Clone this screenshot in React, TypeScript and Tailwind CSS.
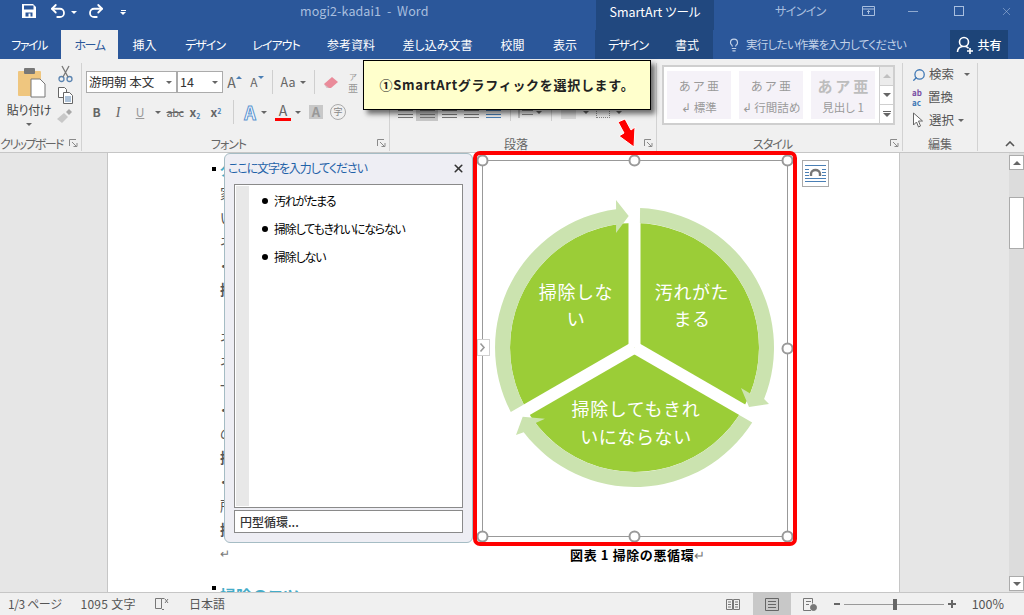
import { ReactNode } from 'react';
import { Lightbulb, Redo2, Search, Undo2, X } from 'lucide-react';

const TABS = [
  { label: 'ファイル', w: 'w-[58px] tracking-[-1.5px]' },
  { label: 'ホーム', w: 'ml-[3px] w-[57px] tracking-[-1.5px] bg-[#f0f0f0] text-[#2b579a]' },
  { label: '挿入', w: 'w-[53px]' },
  { label: 'デザイン', w: 'w-[68px] tracking-[-1px]' },
  { label: 'レイアウト', w: 'w-[74px] tracking-[-1px]' },
  { label: '参考資料', w: 'w-[76px]' },
  { label: '差し込み文書', w: 'w-[97px]' },
  { label: '校閲', w: 'w-[53px]' },
  { label: '表示', w: 'w-[52px]' },
  { label: 'デザイン', w: 'ml-[4px] w-[66px] tracking-[-1px] bg-[#21487f]' },
  { label: '書式', w: 'w-[52px] bg-[#21487f]' },
];

// sliver of each body line that peeks out left of the text pane
const BODY_LINES = ['家', 'い', 'ネ', '・', '掃', '', 'ネ', 'ネ', '一', '・', 'の', '掃', '・', '所', '掃'];

const CX = 634.5;
const CY = 347.5;
const pol = (r: number, deg: number) => {
  const a = (deg * Math.PI) / 180;
  return `${(CX + r * Math.cos(a)).toFixed(1)},${(CY + r * Math.sin(a)).toFixed(1)}`;
};
const R = 139.5;
const r = 124.5;

function ringSegment(a0: number, a0i: number, a1: number, a1i: number, head: string) {
  return `M${pol(R, a0)} A${R} ${R} 0 0 1 ${pol(R, a1)} ${head} L${pol(r, a1i)} A${r} ${r} 0 0 0 ${pol(r, a0i)} Z`;
}

function Caret({ className = '' }: { className?: string }) {
  return <span className={`inline-block w-0 h-0 border-x-[3px] border-x-transparent border-t-[3px] border-t-[#666] ${className}`} />;
}

function Launcher() {
  return (
    <svg className="absolute right-[3px] bottom-[3px]" width="9" height="9" viewBox="0 0 9 9">
      <path d="M.5 7V.5H7" fill="none" stroke="#8a8a8a" />
      <path d="M3 3l4 4M4.500 7.500h3.500V4" fill="none" stroke="#8a8a8a" />
    </svg>
  );
}

function Group({ label, w, labelClass = 'pr-[14px]', children }: { label: string; w: string; labelClass?: string; children: ReactNode }) {
  return (
    <div className={`relative flex flex-col h-[88px] border-r border-[#d2d2d2] ${w}`}>
      <div className="flex-1 min-h-0">{children}</div>
      <div className={`h-[15px] text-center text-[12px] leading-[15px] text-[#666] whitespace-nowrap ${labelClass}`}>{label}</div>
      <Launcher />
    </div>
  );
}

function Cell({ w, children }: { w: string; children: ReactNode }) {
  return <div className={`flex items-center justify-center shrink-0 h-[22px] ${w}`}>{children}</div>;
}

function Sep({ h = 'h-[24px]', m = 'mx-[4px]' }: { h?: string; m?: string }) {
  return <div className={`w-px shrink-0 bg-[#cfcfcf] ${h} ${m}`} />;
}

function AlignIcon({ active, blue }: { active?: boolean; blue?: boolean }) {
  const stroke = blue ? '#4a7fb5' : '#777';
  return (
    <div className={`flex items-center justify-center h-[18px] w-[22px] ${active ? 'bg-[#c6c6c6]' : ''}`}>
      <svg width="15" height="14" viewBox="0 0 15 14">
        <path d="M0 1.500h15M0 5.500h15M0 9.500h15M0 12.500h15" stroke={stroke} fill="none" />
      </svg>
    </div>
  );
}

function StyleChip({ label, title }: { label: string; title?: boolean }) {
  return (
    <div className="flex flex-col items-center w-[64px] h-[48px] bg-[#f5f2f8] text-[#9a9a9a]">
      <div className={`mt-[5px] leading-[20px] ${title ? 'text-[15px] font-bold text-[#bdbdbd]' : 'text-[12px]'}`}>あ ア 亜</div>
      <div className="mt-[3px] text-[11.5px] leading-[16px] whitespace-nowrap">{label}</div>
    </div>
  );
}

function Clipboard() {
  return (
    <div className="flex h-full">
      <div className="flex flex-col items-center w-[58px] pt-[5px]">
        <svg className="ml-[5px]" width="30" height="30" viewBox="0 0 30 30">
          <rect x="1" y="3" width="23" height="25" rx="1" fill="#efc67f" />
          <rect x="7" y="0" width="11" height="6" rx="1" fill="#777" />
          <path d="M14 11h9l5 5v13H14z" fill="#fff" stroke="#777" />
        </svg>
        <div className="mt-[3px] text-[12px] leading-[18px] text-[#444] whitespace-nowrap tracking-[-0.3px]">貼り付け</div>
        <Caret className="mt-[4px]" />
      </div>
      <div className="flex flex-col items-center w-[14px] pt-[2px] gap-[4px]">
        <svg width="15" height="18" viewBox="0 0 15 18" fill="none" stroke="#5b84b1" strokeWidth="1.3">
          <circle cx="3.500" cy="14" r="2.500" />
          <circle cx="11.500" cy="14" r="2.500" />
          <path d="M5 12 11 1M10 12 4 1" stroke="#777" />
        </svg>
        <svg width="15" height="17" viewBox="0 0 15 17" fill="#fff" stroke="#666">
          <path d="M.5.5h6l2 2v8h-8z" />
          <path d="M5.500 5.500h6l3 3v8h-9z" />
          <path d="M7 10h6M7 12h6M7 14h6" stroke="#5b84b1" />
        </svg>
        <svg width="16" height="15" viewBox="0 0 16 15">
          <path d="M0 11 7 5l4 4-6 6z" fill="#c8c8c8" />
          <path d="M9 4 12 1l3 3-3 3z" fill="#a8a8a8" />
        </svg>
      </div>
    </div>
  );
}

function FontGroup() {
  return (
    <div className="flex flex-col pl-[4px] pt-[7px] text-[#666]">
      <div className="flex items-center">
        <div className="flex items-center justify-between w-[91px] h-[22px] px-[2px] bg-white border border-[#ababab] text-[12.5px] text-[#333] whitespace-nowrap">
          游明朝 本文
          <Caret className="mr-[2px]" />
        </div>
        <div className="flex items-center justify-between w-[46px] h-[22px] px-[2px] bg-white border border-[#ababab] text-[12.5px] text-[#333]">
          14
          <Caret className="mr-[2px]" />
        </div>
        <Cell w="w-[23px]">
          <span className="text-[14px]">A</span>
          <span className="-mt-[10px] w-0 h-0 border-x-[3px] border-x-transparent border-b-[3px] border-b-[#4a7fb5]" />
        </Cell>
        <Cell w="w-[22px]">
          <span className="text-[12px]">A</span>
          <span className="-mt-[10px] w-0 h-0 border-x-[3px] border-x-transparent border-t-[3px] border-t-[#4a7fb5]" />
        </Cell>
        <Sep m="ml-[4px] mr-[3px]" />
        <Cell w="w-[24px]"><span className="text-[12.5px]">Aa</span></Cell>
        <Caret />
        <Sep m="mx-[8px]" />
        <svg width="16" height="14" viewBox="0 0 16 14">
          <path d="M1 9 9 2l6 5-7 6H4z" fill="#ea8b9a" />
          <path d="M1 9l5 4H4z" fill="#ccc" />
        </svg>
        <div className="ml-[9px] flex flex-col items-center text-[8px] leading-[10px] text-[#999]">
          <span>ア</span>
          <span className="text-[10px] leading-[11px]">亜</span>
        </div>
      </div>
      <div className="flex items-center mt-[6px] text-[12px]">
        <Cell w="w-[21px]"><b>B</b></Cell>
        <Cell w="w-[22px]"><i className="font-['Liberation_Serif',serif] text-[14px]">I</i></Cell>
        <Cell w="w-[22px]"><span className="underline text-[#999]">U</span></Cell>
        <Cell w="w-[14px]"><Caret /></Cell>
        <Cell w="w-[20px]"><span className="line-through text-[11px] tracking-[-0.5px]">abc</span></Cell>
        <Cell w="w-[20px]"><b>x<sub className="text-[7px] text-[#4a7fb5]">2</sub></b></Cell>
        <Cell w="w-[22px]"><b>x<sup className="text-[7px] text-[#4a7fb5]">2</sup></b></Cell>
        <Sep m="ml-[6px] mr-[5px]" />
        <Cell w="w-[22px]"><span className="text-[18px] font-bold text-white [-webkit-text-stroke:1px_#5b94d0]">A</span></Cell>
        <Cell w="w-[6px]"><Caret /></Cell>
        <div className="flex flex-col items-center w-[16px] ml-[8px]">
          <span className="text-[14px] leading-[15px]">A</span>
          <span className="w-[16px] h-[3px] bg-[#ff0000]" />
        </div>
        <Cell w="w-[14px]"><Caret /></Cell>
        <div className="flex items-center justify-center w-[14px] h-[14px] ml-[4px] bg-[#c8c8c8] text-[13px] text-[#999] font-bold">A</div>
        <div className="flex items-center justify-center w-[16px] h-[16px] ml-[7px] rounded-full border border-[#aaa] text-[9px] text-[#888]">字</div>
      </div>
    </div>
  );
}

function Paragraph() {
  return (
    <div className="flex items-center h-full pt-[25px] pl-[4px]">
      <AlignIcon />
      <AlignIcon active />
      <AlignIcon />
      <AlignIcon />
      <AlignIcon blue />
      <Sep h="h-[18px]" m="mx-[6px]" />
      <svg width="16" height="14" viewBox="0 0 16 14" fill="none" stroke="#888"><path d="M5 1.500h11M5 5.500h11M5 9.500h11M2 1v12" /></svg>
      <Caret className="ml-[3px]" />
      <Sep h="h-[18px]" m="mx-[9px]" />
      <div className="w-[15px] h-[13px] bg-[#d8d8d8]" />
      <Caret className="ml-[7px]" />
      <div className="w-[14px] h-[12px] ml-[7px] border border-dotted border-[#888]" />
      <Caret className="ml-[6px] border-t-[#444]" />
    </div>
  );
}

function Styles() {
  return (
    <div className="flex ml-[5px] mt-[2px] w-[233px] h-[60px] bg-white border-2 border-[#cfcfcf]">
      <div className="flex flex-1 gap-[8px] pl-[3px] pt-[4px]">
        <StyleChip label="↲ 標準" />
        <StyleChip label="↲ 行間詰め" />
        <StyleChip label="見出し 1" title />
      </div>
      <div className="flex flex-col w-[14px] border-l border-[#cfcfcf] text-center">
        <div className="flex-1 flex items-center justify-center bg-[#ececec]">
          <span className="w-0 h-0 border-x-[4px] border-x-transparent border-b-[4px] border-b-[#c0c0c0]" />
        </div>
        <div className="flex-1 flex items-center justify-center border-y border-[#cfcfcf]">
          <Caret className="border-x-[4px] border-t-[4px]" />
        </div>
        <div className="flex-1 flex flex-col items-center justify-center gap-px">
          <span className="w-[8px] h-px bg-[#666]" />
          <Caret className="border-x-[4px] border-t-[4px]" />
        </div>
      </div>
    </div>
  );
}

function Editing() {
  return (
    <div className="flex flex-col gap-[2px] pl-[9px] pt-[1px] text-[12.5px] text-[#555]">
      <div className="flex items-center h-[21px] gap-[3px] whitespace-nowrap">
        <Search size={14} strokeWidth={2.2} color="#3f78b5" className="-scale-x-100" />
        検索
        <Caret className="ml-[7px]" />
      </div>
      <div className="flex items-center h-[21px] gap-[6px] whitespace-nowrap">
        <div className="flex flex-col text-[8px] leading-[10px] font-bold">
          <span className="text-[#7a4fa3]">ab</span>
          <span className="text-[#3f78b5]">ac</span>
        </div>
        置換
      </div>
      <div className="flex items-center h-[21px] gap-[4px] whitespace-nowrap">
        <svg width="13" height="17" viewBox="0 0 13 17" fill="#fff" stroke="#666"><path d="M1.500 1v12l3-3 2 5 2-1-2-5h4z" /></svg>
        選択
        <Caret />
      </div>
    </div>
  );
}

function SmartArtDiagram() {
  const line = (deg: number) => pol(126, deg).split(',');
  return (
    <svg width="316" height="387" viewBox="477 155 316 387" className="block">
      <rect x="482.5" y="160.5" width="305" height="376" fill="#fff" stroke="#999" />
      <circle cx={CX} cy={CY} r={r} fill="#9bcd37" />
      {[-90, 30, 150].map((deg) => (
        <line key={deg} x1={CX} y1={CY} x2={line(deg)[0]} y2={line(deg)[1]} stroke="#fff" strokeWidth="12" />
      ))}
      <path d={ringSegment(-87.7, -87.5, 21.7, 21.7, 'L769,404 L749,407 L741,388')} fill="#cbe3af" />
      <path d={ringSegment(32.5, 32.8, 142.6, 142.6, 'L516,435 L522.7,416.7 L545,418.7')} fill="#cbe3af" />
      <path d={ringSegment(152.5, 152.8, -97.6, -98.5, 'L616,200 L628.7,216 L616,233')} fill="#cbe3af" />
      <g fill="#fff" fontSize="18" textAnchor="middle" letterSpacing="0.6" className="[font-feature-settings:normal]">
        <text x="576" y="299">掃除しな</text>
        <text x="576" y="326">い</text>
        <text x="692" y="299">汚れがた</text>
        <text x="692" y="326">まる</text>
        <text x="636" y="416">掃除してもきれ</text>
        <text x="636" y="444">いにならない</text>
      </g>
      {[
        [482, 160],
        [634, 160],
        [787, 160],
        [787, 348],
        [482, 536],
        [634, 536],
        [787, 536],
      ].map(([x, y]) => (
        <circle key={`${x}-${y}`} cx={x + 0.5} cy={y + 0.5} r="5" fill="#fff" stroke="#999" strokeWidth="2" />
      ))}
      <rect x="477.500" y="339.500" width="12" height="16" fill="#fff" stroke="#d0d0d0" />
      <path d="M480.500 343.500l3.500 4-3.500 4" fill="none" stroke="#999" strokeWidth="1.600" />
    </svg>
  );
}

function TextPane() {
  return (
    <div className="absolute left-[116px] top-0 flex flex-col w-[249px] h-[390px] px-[9px] bg-[#eeeef4] border border-[#a5bcc4] rounded-[6px]">
      <div className="flex items-center justify-between h-[30px] pb-[2px] -mx-[6px] pr-[4px] text-[12px] tracking-[-1.1px] text-[#1f62a8] whitespace-nowrap">
        ここに文字を入力してください
        <X size={13} strokeWidth={3} color="#333" />
      </div>
      <div className="flex h-[324px] p-[1px] bg-white border border-[#8a8a8a]">
        <div className="w-[13px] bg-[#e8e8e8]" />
        <ul className="flex flex-col pt-[1px] pl-[13px] text-[12px] leading-[28px] tracking-[-1.2px] text-black">
          {['汚れがたまる', '掃除してもきれいにならない', '掃除しない'].map((item) => (
            <li key={item} className="flex items-center gap-[6px]">
              <span className="w-[6px] h-[6px] rounded-full bg-black" />
              {item}
            </li>
          ))}
        </ul>
      </div>
      <div className="mt-[2px] h-[23px] px-[5px] bg-white border border-[#8a8a8a] text-[12px] leading-[21px] text-[#333] font-medium">
        円型循環...
      </div>
    </div>
  );
}

function Page() {
  return (
    <div className="relative flex flex-col w-[793px] h-full bg-white border-x border-[#c6c6c6]">
      <div className="flex -mt-[2px]">
        <div className="w-[365px] pl-[104px] pt-[6px] text-[14px] leading-[24px] text-[#555]">
          <div className="flex items-center gap-[4px]">
            <span className="w-[4px] h-[4px] bg-black" />
            <span className="font-bold text-[#45acc8]">タ</span>
          </div>
          {BODY_LINES.map((c, i) => (
            <div key={i} className={`h-[24px] pl-[8px] ${c === '掃' ? 'font-bold' : ''}`}>{c}</div>
          ))}
          <div className="pl-[8px] text-[12px] text-[#777]">↵</div>
        </div>
        <div className="flex flex-col items-center w-[324px]">
          <div className="w-[324px] h-[395px] border-[4px] border-[#ff0000] rounded-[7px]">
            <SmartArtDiagram />
          </div>
          <div className="ml-[6px] text-[13px] leading-[18px] tracking-[0.6px] font-bold text-black whitespace-nowrap [font-feature-settings:normal]">
            図表 1 掃除の悪循環<span className="font-normal text-[#777]">↵</span>
          </div>
        </div>
        <div className="ml-[5px] mt-[9px] flex items-center justify-center w-[27px] h-[27px] border border-[#aaa] bg-white">
          <svg width="21" height="21" viewBox="0 0 21 21" fill="none">
            <path d="M0 2.500h21M0 18.500h21M0 15.500h21M0 6.500h4M17 6.500h4M0 9.500h4M17 9.500h4M0 12.500h4M17 12.500h4" stroke="#4a7fb5" />
            <path d="M6 13V11a4.500 4 0 0 1 9 0v2" stroke="#777" strokeWidth="2.400" />
          </svg>
        </div>
      </div>
      <div className="flex items-start gap-[4px] pl-[104px] mt-[14px] text-[16px] leading-[24px] font-bold text-[#45acc8]">
        <span className="mt-[7px] w-[4px] h-[4px] bg-black" />
        <span className="mt-[4px]">掃除のコツ</span>
      </div>
      <TextPane />
    </div>
  );
}

function Scrollbar() {
  return (
    <div className="flex flex-col justify-between w-[15px] h-full ml-auto pt-[2px] pb-[1px] bg-[#dcdcdc]">
      <div className="flex flex-col">
        <div className="flex items-center justify-center h-[15px] bg-white border border-[#ababab]">
          <span className="w-0 h-0 border-x-[4px] border-x-transparent border-b-[4px] border-b-[#666]" />
        </div>
        <div className="mt-[27px] h-[52px] bg-white border border-[#ababab]" />
      </div>
      <div className="flex items-center justify-center h-[15px] bg-white border border-[#ababab]">
        <Caret className="border-x-[4px] border-t-[4px]" />
      </div>
    </div>
  );
}

export default function App() {
  return (
    <div className="relative flex flex-col w-[1024px] h-[615px] overflow-hidden bg-[#e6e6e6] font-['Noto_Sans_CJK_JP',sans-serif] [font-feature-settings:'palt']">
      {/* title bar */}
      <div className="relative flex items-center h-[30px] bg-[#2b579a] text-white">
        <svg className="ml-[22px] -mt-[8px]" width="14" height="14" viewBox="0 0 14 14">
          <path d="M0 0h11l3 3v11H0z" fill="#fff" />
          <path d="M2 1.500h9.500v4H2zM3.500 8.500h7v4h-2v-3h-2v3h-3z" fill="#2b579a" />
        </svg>
        <Undo2 className="ml-[13px] -mt-[8px]" size={18} strokeWidth={2.4} />
        <Caret className="ml-[4px] -mt-[6px] border-t-white" />
        <Redo2 className="ml-[10px] -mt-[8px]" size={18} strokeWidth={2.4} />
        <div className="ml-[15px] -mt-[6px] flex flex-col items-center gap-[1px]">
          <span className="w-[5px] h-px bg-white" />
          <Caret className="border-t-white" />
        </div>
        <div className="ml-[174px] w-[130px] -mt-[8px] text-[12.5px] tracking-[0.1px] text-[#a9bfdf] whitespace-pre">mogi2-kadai1  -  Word</div>
        <div className="flex items-center justify-center ml-[166px] w-[118px] h-[30px] pb-[5px] bg-[#21487f] text-[12.5px] whitespace-nowrap">SmartArt ツール</div>
        <div className="ml-[61px] -mt-[8px] text-[12px] tracking-[-0.6px] text-[#a9bfdf] whitespace-nowrap">サインイン</div>
        <svg className="ml-[36px] -mt-[8px]" width="13" height="10" viewBox="0 0 13 10" fill="none" stroke="#a9bfdf">
          <path d="M.5.5h12v9H.5zM.5 3h12M6.500 8V4.500M5 6l1.500-1.500L8 6" />
        </svg>
        <span className="ml-[33px] -mt-[8px] w-[10px] h-px bg-[#8fa9cf]" />
        <span className="ml-[36px] -mt-[8px] w-[10px] h-[10px] border border-[#a9bfdf]" />
        <X className="ml-[36px] -mt-[8px]" size={13} strokeWidth={1} color="#a9bfdf" />
      </div>

      {/* tabs */}
      <div className="flex items-stretch h-[29px] bg-[#2b579a] text-[12px] text-white">
        {TABS.map((tab, i) => (
          <div key={i} className={`flex items-center justify-center whitespace-nowrap ${tab.w}`}>
            {tab.label}
          </div>
        ))}
        <div className="flex items-center ml-[14px] text-[11.5px] tracking-[-0.7px] text-[#c3d2e8] whitespace-nowrap">
          <Lightbulb size={14} className="mr-[5px]" />
          実行したい作業を入力してください
        </div>
        <div className="flex items-center justify-center gap-[3px] w-[58px] ml-auto mr-[16px] bg-[#1d4478] font-medium">
          <svg width="18" height="18" viewBox="0 0 18 18" fill="none" stroke="#fff" strokeWidth="1.600">
            <circle cx="8" cy="6" r="4.500" />
            <path d="M1.500 16c0-3 2-5 5-5.500M9.500 10.500c1.500.3 2.500 1 3 1.800M11 15h6M14 12v6" />
          </svg>
          共有
        </div>
      </div>

      {/* ribbon */}
      <div className="relative flex h-[94px] pt-[4px] bg-[#f0f0f0] border-b border-[#c6c6c6]">
        <Group label="クリップボード" w="w-[82px]" labelClass="pr-[18px] tracking-[-1.6px]"><Clipboard /></Group>
        <Group label="フォント" w="w-[308px]" labelClass="pr-[14px] tracking-[-1px]"><FontGroup /></Group>
        <Group label="段落" w="w-[267px]"><Paragraph /></Group>
        <Group label="スタイル" w="w-[246px]" labelClass="pr-[14px] tracking-[-1px]"><Styles /></Group>
        <div className="relative flex flex-col h-[88px] w-[75px] border-r border-[#d2d2d2]">
          <div className="flex-1"><Editing /></div>
          <div className="h-[15px] text-center text-[12px] leading-[15px] text-[#666]">編集</div>
        </div>
        <svg className="self-end ml-[27px] mb-[5px]" width="10" height="6" viewBox="0 0 10 6" fill="none" stroke="#555" strokeWidth="1.600">
          <path d="M1 5l4-4 4 4" />
        </svg>
      </div>

      {/* document */}
      <div className="relative flex h-[439px]">
        <div className="w-[107px] shrink-0" />
        <Page />
        <Scrollbar />
      </div>

      {/* status bar */}
      <div className="relative z-10 flex items-center h-[23px] bg-[#f0f0f0] border-t border-[#c6c6c6] text-[12px] text-[#555]">
        <span className="ml-[8px] tracking-[-0.4px]">1/3 ページ</span>
        <span className="ml-[19px] tracking-[0.3px]">1095 文字</span>
        <svg className="ml-[19px]" width="14" height="14" viewBox="0 0 14 14" fill="none" stroke="#777">
          <path d="M.5 1.500h6v10h-6zM6.500 1.500h3M7 12.500h2M10 2l3 4M13 2l-3 4" />
        </svg>
        <span className="ml-[20px]">日本語</span>
        <svg className="ml-auto" width="14" height="13" viewBox="0 0 14 13" fill="none" stroke="#777">
          <path d="M.5 1.500h6v10h-6zM7.500 1.500h6v10h-6zM2 4h3M2 6.500h3M2 9h3M9 4h3M9 6.500h3M9 9h3" />
        </svg>
        <div className="flex items-center justify-center ml-[13px] w-[38px] h-full bg-[#c8c8c8]">
          <svg width="14" height="13" viewBox="0 0 14 13" fill="none" stroke="#666">
            <path d="M.5.5h13v12H.5zM3 3.500h8M3 6.500h8M3 9.500h8" />
          </svg>
        </div>
        <svg className="ml-[12px]" width="14" height="13" viewBox="0 0 14 13" fill="none" stroke="#777">
          <path d="M8 12.500H.5V.5h9v5M3 3.500h5M3 6.500h3" />
          <circle cx="10.500" cy="9.500" r="3" fill="#777" />
        </svg>
        <span className="ml-[17px] w-[6px] h-[2px] bg-[#666]" />
        <div className="flex items-center ml-[4px] w-[100px] h-[14px]">
          <span className="w-[49px] h-px bg-[#999]" />
          <span className="w-[4px] h-[11px] bg-[#666]" />
          <span className="w-[47px] h-px bg-[#999]" />
        </div>
        <span className="relative ml-[4px] w-[8px] h-[2px] bg-[#666]">
          <span className="absolute left-[3px] -top-[3px] w-[2px] h-[8px] bg-[#666]" />
        </span>
        <span className="ml-[16px] mr-[20px] text-[12.5px]">100%</span>
      </div>

      {/* annotation over the ribbon */}
      <div className="absolute left-[363px] top-[60px] z-20 flex items-center justify-center w-[288px] h-[50px] bg-[#ffffcc] border border-black shadow-[4px_4px_5px_rgba(0,0,0,0.55)] text-[13px] tracking-[0.7px] font-bold text-[#222] whitespace-nowrap [font-feature-settings:normal]">
        ①SmartArtグラフィックを選択します。
      </div>
      <svg className="absolute left-[612px] top-[116px] z-20" width="26" height="34" viewBox="612 116 26 34">
        <path d="M634 147 619 136 624 133 618 122 625 119 631 130 635 127z" fill="#ff0000" stroke="#fff" strokeWidth="1" />
      </svg>
    </div>
  );
}
